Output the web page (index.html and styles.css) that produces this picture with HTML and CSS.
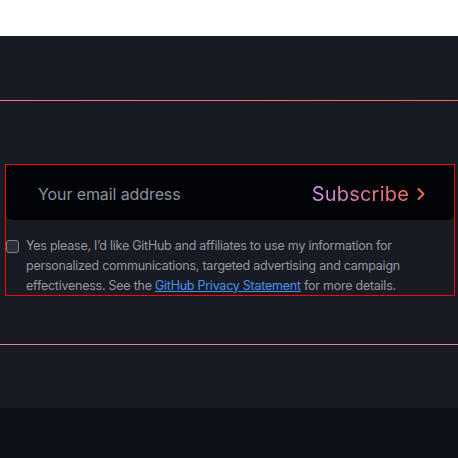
FILE: index.html
```html
<!DOCTYPE html>
<html lang="en">
<head>
<meta charset="utf-8">
<link rel="stylesheet" href="styles.css">
</head>
<body>
<div class="topbar"></div>
<main class="section">
  <div class="rule rule-top"></div>
  <form class="form">
    <div class="field">
      <input class="email" type="email" placeholder="Your email address">
      <button class="subscribe" type="button"><span class="label">Subscribe</span>
        <svg class="chev" width="10" height="14" viewBox="0 0 10 14"><path d="M2.5 2 L7.5 7 L2.5 12" fill="none" stroke="#f2735f" stroke-width="1.8" stroke-linecap="round" stroke-linejoin="round"/></svg>
      </button>
    </div>
    <label class="consent">
      <span class="box"></span>
      <span class="text">Yes please, I’d like GitHub and affiliates to use my information for personalized communications, targeted advertising and campaign effectiveness. See the <a href="#">GitHub Privacy Statement</a> for more details.</span>
    </label>
  </form>
  <div class="rule rule-bottom"></div>
</main>
<footer class="footer"></footer>
</body>
</html>
```

FILE: styles.css
```css
html, body {
  margin: 0;
  padding: 0;
}
body {
  background: #0e1118;
  font-family: Inter, "Noto Sans", sans-serif;
}
.topbar {
  height: 36px;
  background: #ffffff;
}
.section {
  background: #181b22;
  padding-top: 64px;
  height: 372px;
  box-sizing: border-box;
}
.rule {
  height: 1px;
}
.rule-top {
  background: linear-gradient(90deg, #ff6b9e, #f5645c);
}
.rule-bottom {
  background: #e8838d;
  margin-top: 48px;
}
.form {
  margin: 63px 3px 0 5px;
  border: 1px solid #ff0000;
  height: 132px;
  box-sizing: border-box;
}
.field {
  display: flex;
  align-items: center;
  height: 55px;
  background: #020408;
  border-radius: 0 0 6px 6px;
}
.email {
  flex: 1;
  background: transparent;
  border: 0;
  outline: none;
  padding: 0 0 0 32px;
  margin-top: 2px;
  font-family: inherit;
  font-size: 16px;
  letter-spacing: -0.1px;
  color: #e6edf3;
  height: 100%;
}
.email::placeholder {
  color: #8b929c;
}
.subscribe {
  display: flex;
  align-items: center;
  gap: 7px;
  background: transparent;
  border: 0;
  padding: 2px 28px 0 0;
  font-family: inherit;
  font-size: 20px;
  letter-spacing: 0.2px;
  cursor: pointer;
}
.label {
  background: linear-gradient(90deg, #c995ec, #e9708f 60%, #f2735f);
  -webkit-background-clip: text;
  background-clip: text;
  color: transparent;
}
.chev {
  display: block;
}
.consent {
  display: flex;
  align-items: flex-start;
  gap: 7px;
  margin-top: 16px;
}
.box {
  flex: none;
  width: 11px;
  height: 11px;
  border: 1px solid #7d838b;
  border-radius: 3px;
  background: #2b2f36;
  margin-top: 4px;
}
.text {
  font-size: 12.5px;
  letter-spacing: -0.25px;
  line-height: 20px;
  color: #9198a1;
}
.text a {
  color: #4493f8;
  text-decoration: underline;
}
.footer {
  height: 50px;
  background: #0e1118;
}
```
